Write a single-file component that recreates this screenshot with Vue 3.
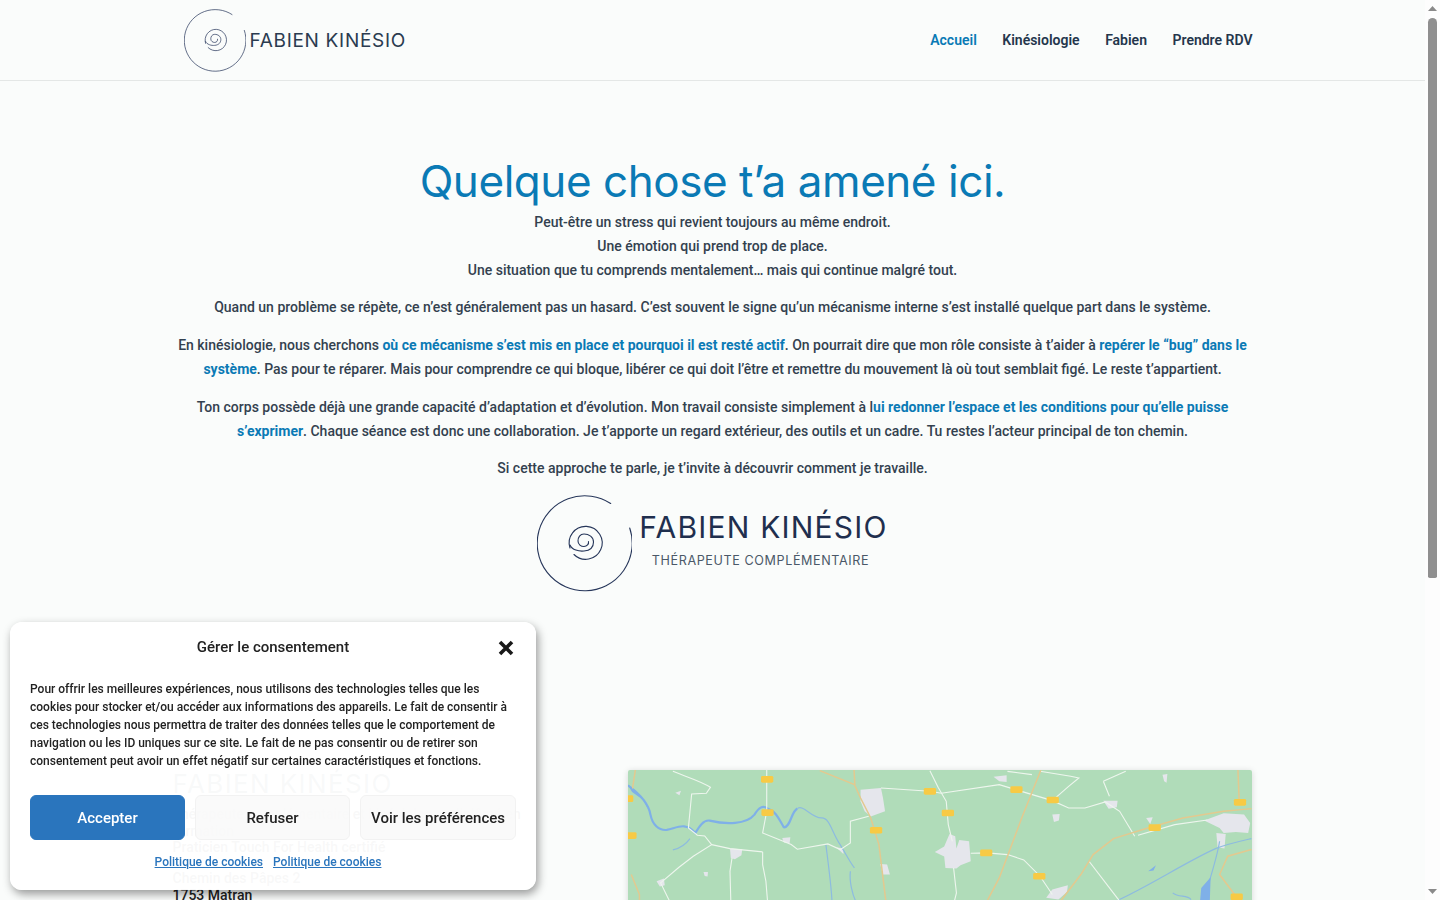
<template>
  <div class="page">
    <header class="site-header">
      <div class="container header-row">
        <a class="logo" href="#">
          <svg class="spiral spiral-sm" viewBox="8 5 95 97" fill="none">
            <path :d="outerArc" />
            <path :d="innerLoop" />
            <path :d="innerCurl" />
          </svg>
          <span class="logo-name">FABIEN KINÉSIO</span>
        </a>
        <nav class="nav">
          <a
            v-for="(item, i) in navItems"
            :key="item"
            href="#"
            :class="{ active: i === 0 }"
          >{{ item }}</a>
        </nav>
      </div>
    </header>

    <main class="container intro">
      <h1>Quelque chose t’a amené ici.</h1>
      <p>
        Peut-être un stress qui revient toujours au même endroit.<br />
        Une émotion qui prend trop de place.<br />
        Une situation que tu comprends mentalement… mais qui continue malgré tout.
      </p>
      <p>Quand un problème se répète, ce n’est généralement pas un hasard. C’est souvent le signe qu’un mécanisme interne s’est installé quelque part dans le système.</p>
      <p>En kinésiologie, nous cherchons <strong>où ce mécanisme s’est mis en place et pourquoi il est resté actif</strong>. On pourrait dire que mon rôle consiste à t’aider à <strong>repérer le “bug” dans le système</strong>. Pas pour te réparer. Mais pour comprendre ce qui bloque, libérer ce qui doit l’être et remettre du mouvement là où tout semblait figé. Le reste t’appartient.</p>
      <p>Ton corps possède déjà une grande capacité d’adaptation et d’évolution. Mon travail consiste simplement à l<strong>ui redonner l’espace et les conditions pour qu’elle puisse s’exprimer</strong>. Chaque séance est donc une collaboration. Je t’apporte un regard extérieur, des outils et un cadre. Tu restes l’acteur principal de ton chemin.</p>
      <p>Si cette approche te parle, je t’invite à découvrir comment je travaille.</p>

      <div class="brand">
        <svg class="spiral spiral-lg" viewBox="8 5 95 97" fill="none">
          <path :d="outerArc" />
          <path :d="innerLoop" />
          <path :d="innerCurl" />
        </svg>
        <div class="brand-text">
          <div class="brand-name">FABIEN KINÉSIO</div>
          <div class="brand-sub">THÉRAPEUTE COMPLÉMENTAIRE</div>
        </div>
      </div>
    </main>

    <section class="container contact">
      <div class="contact-info">
        <h2>FABIEN KINÉSIO</h2>
        <p>
          Thérapeute complémentaire et kinésiologue diplômé en<br />
          formation<br />
          Praticien Touch For Health certifié
        </p>
        <p class="address">
          Chemin des Pâpes 2<br />
          1753 Matran
        </p>
      </div>

      <div class="map">
        <svg viewBox="0 0 624 420" preserveAspectRatio="none">
          <rect width="624" height="420" fill="#b0dcb9" />
          <g transform="scale(0.408 0.333) translate(-20 -26)" fill="none">
            <path
              v-for="(d, i) in towns"
              :key="'t' + i"
              :d="d"
              fill="#e5e6ec"
            />
            <path :d="river" class="water river" />
            <path
              v-for="(d, i) in streams"
              :key="'w' + i"
              :d="d"
              class="water"
            />
            <path
              v-for="(d, i) in roads"
              :key="'r' + i"
              :d="d"
              class="road"
            />
            <path
              v-for="(d, i) in mainRoads"
              :key="'m' + i"
              :d="d"
              class="main-road"
            />
            <path
              d="M20,72 C32,82 48,96 55,112 L72,150 L60,118 L30,92 Z"
              fill="#7fb0e8"
            />
            <path
              d="M1425,380 L1448,348 L1446,420 L1422,420 Z M1295,330 L1314,312 L1308,328 Z"
              fill="#7fb0e8"
            />
            <rect
              v-for="(b, i) in badges"
              :key="'b' + i"
              :x="b[0] - 15"
              :y="b[1] - 10"
              width="30"
              height="20"
              rx="4"
              fill="#f7ca45"
            />
          </g>
        </svg>
      </div>
    </section>

    <div class="consent">
      <div class="consent-head">
        <span class="consent-title">Gérer le consentement</span>
        <svg class="consent-close" viewBox="0 0 16 16">
          <path d="M2 2 L14 14 M14 2 L2 14" />
        </svg>
      </div>
      <p class="consent-text">Pour offrir les meilleures expériences, nous utilisons des technologies telles que les cookies pour stocker et/ou accéder aux informations des appareils. Le fait de consentir à ces technologies nous permettra de traiter des données telles que le comportement de navigation ou les ID uniques sur ce site. Le fait de ne pas consentir ou de retirer son consentement peut avoir un effet négatif sur certaines caractéristiques et fonctions.</p>
      <div class="consent-buttons">
        <button class="btn primary">Accepter</button>
        <button class="btn">Refuser</button>
        <button class="btn">Voir les préférences</button>
      </div>
      <div class="consent-links">
        <a href="#">Politique de cookies</a>
        <a href="#">Politique de cookies</a>
      </div>
    </div>

    <!-- classic scrollbar, the browser here does not paint one -->
    <div class="scrollbar">
      <svg class="arrow" viewBox="0 0 9 5"><path d="M4.5 0 L9 5 L0 5 Z" /></svg>
      <div class="thumb-track"><div class="thumb"></div></div>
      <svg class="arrow" viewBox="0 0 9 5"><path d="M0 0 L9 0 L4.5 5 Z" /></svg>
    </div>
  </div>
</template>

<script setup>
const navItems = ['Accueil', 'Kinésiologie', 'Fabien', 'Prendre RDV']

// spiral logo, same drawing at both sizes
const outerArc = 'M81.7,13.5 A47.5,47.5 0 1 0 100.7,38'
const innerLoop = 'M41,58 A16.5,16.5 0 1 1 45,64.5'
const innerCurl = 'M41,55 C43,60 50,61.5 55,61 C61,60.5 64.5,57 64.5,52 C64.5,47 60,44 55,44 C51,44 49,47.5 49,51 C49,54.5 52,56.5 55,56.5 C58,56.5 60,54 59.5,51.5'

// map paths are in a 1528 wide sheet, scaled by the group above
const towns = [
  'M590,85 L640,80 L645,110 L650,150 L615,166 L600,150 L590,120 Z',
  'M772,272 L795,256 L808,218 L822,225 L825,262 L832,236 L856,240 L860,300 L835,312 L825,322 L798,320 L795,286 Z',
  'M1432,178 L1480,156 L1530,160 L1545,185 L1540,215 L1510,212 L1480,215 L1470,200 Z',
  'M1462,215 L1485,218 L1482,262 L1465,258 Z',
  'M1045,410 L1060,385 L1098,372 L1096,392 L1075,415 Z',
  'M270,262 L300,264 L298,282 L282,294 L272,290 Z',
  'M638,308 L655,310 L662,340 L645,340 Z',
  'M1060,160 L1078,158 L1076,178 L1064,182 Z',
  'M1185,118 L1220,118 L1218,138 L1198,142 Z',
  'M916,46 L948,42 L948,62 L930,60 Z',
  'M398,230 L418,228 L416,246 L402,244 Z',
  'M90,360 L108,352 L110,372 L98,376 Z',
  'M530,258 L548,262 L548,278 Z',
  'M205,332 L216,332 L215,346 L208,344 Z',
  'M1330,40 L1342,38 L1340,64 L1334,60 Z',
  'M136,94 L150,88 L146,102 Z',
  'M1290,170 L1306,168 L1300,188 Z'
]
const river = 'M20,72 C40,90 70,120 75,160 C80,190 95,208 115,206 C140,200 160,180 185,215 C195,195 205,175 220,178 C260,190 310,190 330,160 C340,140 350,130 362,142 C385,150 392,180 402,198 C418,200 420,150 435,142'
const streams = [
  'M435,142 C450,128 470,172 495,170 C515,170 520,215 540,250 C555,280 565,305 575,320',
  'M130,266 C145,262 160,252 172,232',
  'M505,250 C510,300 518,370 520,420',
  'M565,330 C562,360 570,400 578,420',
  'M1215,420 C1290,380 1390,300 1460,262 C1490,248 1520,240 1548,232',
  'M1470,240 C1465,280 1450,340 1440,380',
  'M1355,395 C1370,410 1390,400 1400,415'
]
const roads = [
  'M130,30 C160,45 200,60 222,78 L212,96 L176,98 L168,200 L190,222 L208,224 L225,250 L180,285 L145,318 L100,365 L122,420',
  'M225,250 L270,262 L350,272 M350,272 L350,310 L358,360 L362,420 M275,290 L270,330 L272,420',
  'M360,26 L360,150 L350,215 L420,250 L435,264 L510,248 L540,265 L565,245 L565,180 L610,165',
  'M640,80 L760,90 L788,96 L930,70 L970,85 L1060,118 L1100,140 L1140,140 L1190,122 L1225,150 L1262,225',
  'M760,28 L780,78 L800,120 L805,190 L815,240 M818,320 L825,395 L820,420',
  'M860,276 L900,275 L950,280 L990,296 L1030,345 L1060,400',
  'M1150,300 L1225,420',
  'M1030,30 L1105,45 L1125,50 L1100,75 L1060,118 M1185,60 L1240,30 M1185,60 L1200,105',
  'M1270,222 L1360,190 L1440,176',
  'M950,30 L1010,40'
]
const mainRoads = [
  'M490,28 L575,70 L590,110 L615,170 L635,250 L652,420',
  'M574,26 L576,70',
  'M1032,26 L985,170 L930,350 L900,420',
  'M1080,420 L1130,340 L1160,280 L1210,232 L1300,198 L1380,170 L1480,150 L1548,142',
  'M1515,26 L1518,120',
  'M1548,265 L1490,285 L1470,340 L1510,405',
  'M28,340 L48,400 L48,420',
  'M38,26 L30,90'
]
const badges = [
  [361, 54], [362, 154], [628, 207], [760, 90], [804, 155], [972, 85],
  [1061, 116], [1311, 199], [1520, 123], [898, 275], [1028, 345], [1512, 407],
  [26, 223], [18, 112]
]
</script>

<style scoped>
.page {
  width: 1425px;
  min-height: 1390px;
  background: #fafcfb;
  color: #33414f;
  font-family: Roboto, "Liberation Sans", sans-serif;
  font-size: 14px;
  line-height: 23.8px;
  font-weight: 500;
}

.container {
  width: 1080px;
  margin: 0 auto;
}

.site-header {
  height: 80px;
  border-bottom: 1px solid #e4e7e6;
}

.header-row {
  height: 80px;
  display: flex;
  align-items: center;
  justify-content: space-between;
}

.logo {
  display: flex;
  align-items: center;
  gap: 4px;
  margin-left: 11px;
  text-decoration: none;
}

.spiral path {
  stroke: #26365a;
  stroke-width: 1.1;
  stroke-linecap: round;
}

.spiral-sm {
  width: 62px;
  height: 63px;
}

.spiral-lg {
  width: 95px;
  height: 97px;
}

.logo-name {
  margin-top: 1px;
  font-family: Inter, "Liberation Sans", sans-serif;
  font-size: 19px;
  font-weight: 400;
  letter-spacing: 0.7px;
  color: #2a3b50;
  white-space: nowrap;
}

.nav {
  display: flex;
  gap: 25.5px;
  padding-top: 1px;
}

.nav a {
  color: #24364c;
  text-decoration: none;
  font-weight: 600;
}

.nav a.active {
  color: #0a7ab5;
}

.intro {
  padding-top: 74px;
  text-align: center;
}

h1 {
  margin: 0 0 4px;
  font-family: Inter, "Liberation Sans", sans-serif;
  font-size: 44px;
  line-height: 52px;
  font-weight: 400;
  letter-spacing: -0.45px;
  color: #0a7ab5;
}

.intro p {
  margin: 0 0 14px;
}

.intro strong {
  color: #0a7ab5;
  font-weight: 700;
}

.brand {
  display: flex;
  justify-content: center;
  align-items: center;
  gap: 7px;
  margin-top: 12px;
}

.brand-text {
  display: flex;
  flex-direction: column;
  align-items: center;
  margin-top: -8px;
}

.brand-name {
  font-family: Inter, "Liberation Sans", sans-serif;
  font-size: 30px;
  line-height: 36px;
  font-weight: 400;
  letter-spacing: 1.2px;
  color: #1f2f4e;
  white-space: nowrap;
}

.brand-sub {
  margin-top: 7px;
  margin-right: 6px;
  font-family: Inter, "Liberation Sans", sans-serif;
  font-size: 12.6px;
  line-height: 18px;
  font-weight: 400;
  letter-spacing: 0.6px;
  color: #4a5868;
  white-space: nowrap;
}

.contact {
  display: flex;
  justify-content: space-between;
  align-items: flex-start;
  margin-top: 178px;
}

.contact-info {
  width: 400px;
  padding-top: 1px;
  color: #222;
  font-size: 14px;
  line-height: 16.6px;
}

.contact-info h2 {
  margin: 0 0 9px;
  font-family: Inter, "Liberation Sans", sans-serif;
  font-size: 26px;
  line-height: 26px;
  font-weight: 400;
  letter-spacing: 1.4px;
  color: #2a3b50;
}

.contact-info p {
  margin: 0;
  white-space: nowrap;
}

.contact-info .address {
  margin-top: 14px;
}

.map {
  width: 624px;
  height: 420px;
  margin-right: 0.5px;
  box-shadow: 0 1px 6px rgba(0, 0, 0, 0.15);
  border-radius: 2px;
  overflow: hidden;
}

.map svg {
  display: block;
  width: 100%;
  height: 100%;
  filter: blur(0.5px);
}

.water {
  stroke: #8dbbe0;
  stroke-width: 1.2;
  vector-effect: non-scaling-stroke;
}

.water.river {
  stroke: #7fb0e8;
  stroke-width: 2.2;
}

.road {
  stroke: #eef6ee;
  stroke-width: 1.1;
  vector-effect: non-scaling-stroke;
}

.main-road {
  stroke: #e3c98f;
  stroke-width: 1.5;
  vector-effect: non-scaling-stroke;
}

.consent {
  position: fixed;
  left: 10px;
  bottom: 10px;
  width: 526px;
  height: 268px;
  box-sizing: border-box;
  padding: 0 20px;
  background: rgba(255, 255, 255, 0.97);
  border-radius: 12px;
  box-shadow: 2px 4px 10px rgba(0, 0, 0, 0.4);
  color: #222;
}

.consent-head {
  height: 50px;
  display: flex;
  align-items: center;
  justify-content: center;
  position: relative;
}

.consent-title {
  margin-top: 2px;
  font-size: 15px;
  font-weight: 500;
}

.consent-close {
  position: absolute;
  right: 2px;
  top: 18px;
  width: 16px;
  height: 16px;
}

.consent-close path {
  stroke: #191919;
  stroke-width: 3.6;
  fill: none;
}

.consent-text {
  margin: 8px 0 0;
  font-size: 12px;
  line-height: 18px;
  font-weight: 500;
}

.consent-buttons {
  display: flex;
  gap: 10px;
  margin-top: 25px;
}

.btn {
  flex: 0 0 155px;
  height: 45px;
  padding: 0;
  border: 1px solid #f2f2f2;
  border-radius: 6px;
  background: rgba(249, 249, 249, 0.8);
  color: #222;
  font-family: Roboto, "Liberation Sans", sans-serif;
  font-size: 15px;
  font-weight: 500;
}

.btn:last-child {
  flex: 1 1 0;
}

.btn.primary {
  background: #2a75bd;
  border-color: #2a75bd;
  color: #fff;
}

.consent-links {
  display: flex;
  justify-content: center;
  gap: 10px;
  margin-top: 13px;
  margin-right: 10px;
  font-size: 12px;
  line-height: 18px;
}

.consent-links a {
  color: #2a75bd;
}

.scrollbar {
  position: fixed;
  top: 0;
  right: 0;
  width: 15px;
  height: 100%;
  display: flex;
  flex-direction: column;
  align-items: center;
  background: #fdfdfd;
}

.arrow {
  flex: none;
  width: 9px;
  height: 5px;
  margin: 6px 0;
  fill: #8a8a8a;
}

.thumb-track {
  flex: 1;
  width: 100%;
}

.thumb {
  width: 9px;
  height: 560px;
  margin: 1px auto 0;
  border-radius: 5px 5px 2px 2px;
  background: #8f8f8f;
}
</style>

<style>
html,
body {
  margin: 0;
  background: #fafcfb;
}
</style>
